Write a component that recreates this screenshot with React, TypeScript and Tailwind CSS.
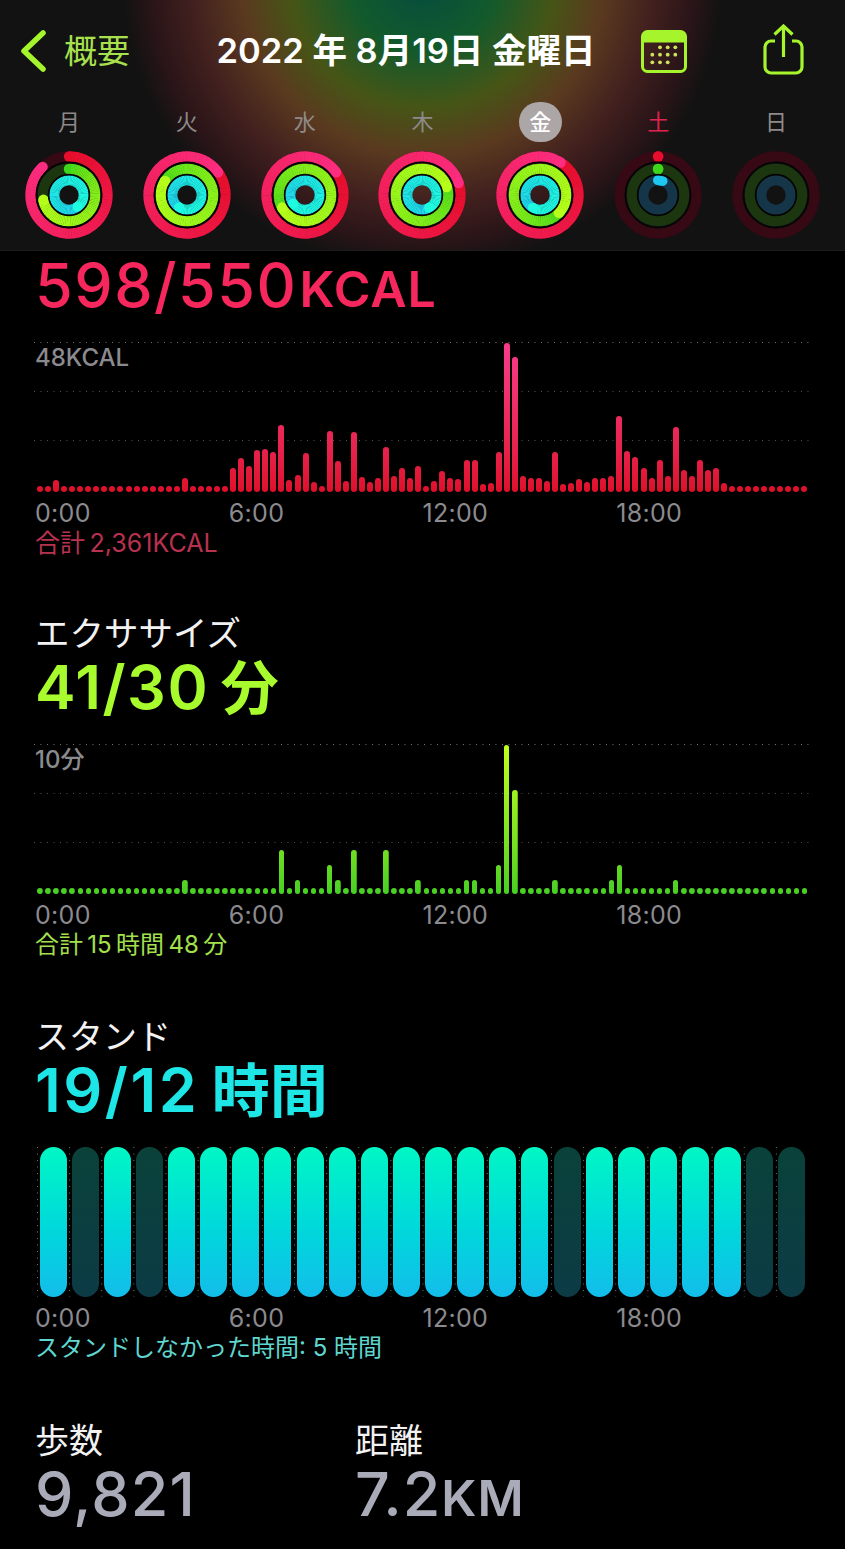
const redBars = [
  6, 6, 12, 6, 6, 6, 6, 6, 6, 6, 6, 6, 6, 6, 6, 6, 6, 6, 14, 6, 6, 6, 6, 6,
  24, 34, 26, 42, 43, 40, 67, 12, 17, 39, 10, 6, 61, 31, 11, 60, 15, 10, 14, 45, 16, 24, 14, 26,
  6, 11, 21, 14, 13, 32, 32, 8, 9, 40, 149, 135, 16, 14, 14, 11, 40, 8, 9, 13, 10, 14, 14, 16,
  76, 41, 35, 24, 14, 32, 16, 65, 22, 16, 32, 22, 24, 9, 6, 6, 6, 6, 6, 6, 6, 6, 6, 6,
];

const greenPeaks: Record<number, number> = {
  18: 14, 30: 44, 32: 14, 36: 29, 37: 14, 39: 44, 43: 44, 47: 14, 53: 14, 54: 14,
  57: 29, 58: 149, 59: 104, 64: 14, 71: 14, 72: 29, 79: 14,
};
const greenBars = Array.from({ length: 96 }, (_, i) => greenPeaks[i] ?? 6);

const standOff = [1, 3, 16, 22, 23];

const days = [
  { label: "月", rings: [0.88, 0.72, 1.4] },
  { label: "火", rings: [1.15, 1.84, 1.59] },
  { label: "水", rings: [1.15, 1.67, 1.65] },
  { label: "木", rings: [1.2, 1.2, 1.42] },
  { label: "金", rings: [1.09, 1.37, 1.58], selected: true },
  { label: "土", rings: [0.001, 0.001, 0.05], weekend: true },
  { label: "日", rings: [0, 0, 0] },
];

// curve: how quickly a lap moves from the start colour to the end colour
const ringStyles = [
  { r: 38.5, width: 10.3, track: "#360914", from: [230, 14, 44], to: [252, 45, 128], curve: 1 },
  { r: 26, width: 10.5, track: "#1c3710", from: [62, 214, 26], to: [182, 255, 26], curve: 0.5 },
  { r: 14.7, width: 10, track: "#143648", from: [31, 200, 240], to: [30, 252, 224], curve: 0.5 },
];

function polar(r: number, deg: number) {
  const a = ((deg - 90) * Math.PI) / 180;
  return [44 + r * Math.cos(a), 44 + r * Math.sin(a)];
}

function mix(from: number[], to: number[], t: number, curve: number) {
  const k = Math.pow(t, curve);
  const c = from.map((v, i) => Math.round(v + (to[i] - v) * k));
  return `rgb(${c[0]},${c[1]},${c[2]})`;
}

function ActivityRings({ rings }: { rings: number[] }) {
  return (
    <svg width="88" height="88" viewBox="0 0 88 88">
      {ringStyles.map((s, idx) => {
        const p = rings[idx];
        const end = p * 360;
        const start = p >= 1 ? end - 360 : 0;
        const steps = 72;
        const [ex, ey] = polar(s.r, end);
        const [sx, sy] = polar(s.r, start);
        return (
          <g key={idx}>
            <circle cx="44" cy="44" r={s.r} fill="none" stroke={s.track} strokeWidth={s.width} />
            {p > 0 && (
              <>
                <circle cx={sx} cy={sy} r={s.width / 2} fill={mix(s.from, s.to, 0, s.curve)} />
                {Array.from({ length: steps }, (_, i) => {
                  const a0 = start + ((end - start) * i) / steps;
                  const a1 = start + ((end - start) * (i + 1.15)) / steps;
                  const [x0, y0] = polar(s.r, a0);
                  const [x1, y1] = polar(s.r, Math.min(a1, end));
                  return (
                    <path
                      key={i}
                      d={`M${x0} ${y0}A${s.r} ${s.r} 0 0 1 ${x1} ${y1}`}
                      fill="none"
                      stroke={mix(s.from, s.to, p < 0.1 ? 0 : i / steps, s.curve)}
                      strokeWidth={s.width}
                    />
                  );
                })}
                <circle cx={ex} cy={ey} r={s.width / 2} fill={mix(s.from, s.to, p < 0.1 ? 0 : 1, s.curve)} />
              </>
            )}
          </g>
        );
      })}
      <circle cx="44" cy="44" r="32.6" fill="none" stroke="#050505" strokeWidth="1.6" />
      <circle cx="44" cy="44" r="20.4" fill="none" stroke="#050505" strokeWidth="1.6" />
    </svg>
  );
}

function CalendarIcon() {
  const dots = [
    [19, 17.3], [26.7, 17.3], [34.3, 17.3],
    [11.3, 24.7], [19, 24.7], [26.7, 24.7], [34.3, 24.7],
    [11.3, 32.3], [19, 32.3], [26.7, 32.3],
  ];
  return (
    <svg width="46" height="43" viewBox="0 0 46 43">
      <rect x="1.5" y="1.5" width="43" height="40" rx="5" fill="none" stroke="#a6f52c" strokeWidth="3" />
      <path d="M1.5 12V6.5a5 5 0 0 1 5-5h33a5 5 0 0 1 5 5V12z" fill="#a6f52c" stroke="#a6f52c" />
      {dots.map(([x, y]) => (
        <circle key={`${x}-${y}`} cx={x} cy={y} r="1.9" fill="#cfe35e" />
      ))}
    </svg>
  );
}

function ShareIcon() {
  return (
    <svg width="41" height="51" viewBox="0 0 41 51" fill="none" stroke="#a6f52c" strokeWidth="3.2">
      <path d="M12 17H8a6 6 0 0 0-6 6v20a6 6 0 0 0 6 6h25a6 6 0 0 0 6-6V23a6 6 0 0 0-6-6h-4" />
      <path d="M20.5 33V2.5" />
      <path d="M11.5 10.5l9-8.5 9 8.5" />
    </svg>
  );
}

function Gridlines() {
  return (
    <div className="-ml-[2px] flex w-[775px] flex-col gap-[48px]">
      <div className="h-px bg-[linear-gradient(to_right,#777_1.2px,transparent_1.2px)] bg-[length:6.5px_1px]" />
      <div className="h-px bg-[linear-gradient(to_right,#555_1.2px,transparent_1.2px)] bg-[length:6.5px_1px]" />
      <div className="h-px bg-[linear-gradient(to_right,#555_1.2px,transparent_1.2px)] bg-[length:6.5px_1px]" />
    </div>
  );
}

function AxisLabels() {
  return (
    <div className="mt-[6px] grid h-[30px] w-[775px] grid-cols-4 text-[25px] leading-[30px] tracking-[0.3px] text-[#8b8b8f]">
      <span>0:00</span>
      <span>6:00</span>
      <span>12:00</span>
      <span>18:00</span>
    </div>
  );
}

function BarChart({ bars, barClass, maxLabel }: { bars: number[]; barClass: string; maxLabel: string }) {
  return (
    <div className="relative ml-[1px] h-[150px] w-[773px]">
      <Gridlines />
      <span className="absolute -left-[1px] top-[1px] text-[24px] font-medium leading-[30px] text-[#8b8b8f]">
        {maxLabel}
      </span>
      <div className="absolute inset-0 flex items-end">
        {bars.map((h, i) => (
          <div key={i} className="flex flex-1 justify-center">
            <div className={barClass} style={{ height: h }} />
          </div>
        ))}
      </div>
    </div>
  );
}

function StandChart() {
  return (
    <div className="ml-[2px] flex h-[150px] w-[771px] bg-[radial-gradient(circle_at_0.5px_0.5px,#777_0.8px,transparent_0.9px)] bg-[length:32.125px_6.5px]">
      {Array.from({ length: 24 }, (_, i) => (
        <div key={i} className="flex flex-1 justify-center">
          {standOff.includes(i) ? (
            <div className="h-full w-[27px] rounded-full bg-linear-to-b from-[#0a423a] to-[#0c3b45]" />
          ) : (
            <div className="h-full w-[27px] rounded-full bg-linear-to-b from-[#00f7c4] to-[#13bdea]" />
          )}
        </div>
      ))}
    </div>
  );
}

export default function App() {
  return (
    <div className="h-[1549px] w-[845px] overflow-hidden bg-black font-[Inter,'Noto_Sans_CJK_JP',sans-serif] text-white">
      <header className="h-[251px] border-b border-[#1c1c1c] bg-[#121212] bg-[radial-gradient(ellipse_300px_290px_at_50%_-20px,#054b40_0%,#125a2c_24%,#465516_44%,#5a3a1f_60%,#43211f_76%,#2b1518_90%,#121212_100%)]">
        <div className="flex h-[102px] items-center pl-[20px]">
          <svg width="26" height="42" viewBox="0 0 26 42" fill="none" stroke="#a6f52c" strokeWidth="5.5" strokeLinecap="round" strokeLinejoin="round">
            <path d="M23 3L4 21l19 18" />
          </svg>
          <span className="ml-[18px] w-[66px] text-[33px] leading-none text-[#a8e04e]">概要</span>
          <h1 className="ml-[86px] w-[380px] whitespace-nowrap text-center text-[34.5px] font-semibold leading-none text-white">
            2022 年 8月19日 金曜日
          </h1>
          <div className="ml-[45px]">
            <CalendarIcon />
          </div>
          <div className="mb-[3px] ml-[76px]">
            <ShareIcon />
          </div>
        </div>
        <div className="grid grid-cols-7 px-[10px]">
          {days.map((d) => (
            <div key={d.label} className="flex flex-col items-center">
              <div
                className={
                  d.selected
                    ? "flex h-[40px] w-[43px] items-center justify-center rounded-full bg-[#aca6a6] text-[22px] font-medium text-white"
                    : d.weekend
                      ? "flex h-[40px] items-center justify-center text-[22px] text-[#e0234f]"
                      : "flex h-[40px] items-center justify-center text-[22px] text-[#8e8a8a]"
                }
              >
                {d.label}
              </div>
              <div className="mt-[9px]">
                <ActivityRings rings={d.rings} />
              </div>
            </div>
          ))}
        </div>
      </header>

      <main className="pl-[35px]">
        <section className="mt-[4px]">
          <p className="h-[60px] text-[61px] font-medium leading-[60px] tracking-[1.5px] text-[#f6275c]">
            598/550<span className="ml-[2px] text-[50px] font-semibold tracking-[1px]">KCAL</span>
          </p>
          <div className="mt-[27px]">
            <BarChart
              bars={redBars}
              maxLabel="48KCAL"
              barClass="w-[6px] rounded-full bg-linear-to-t from-[#df0f2a] to-[#fb3a8c] bg-[length:100%_150px] bg-bottom bg-no-repeat"
            />
          </div>
          <AxisLabels />
          <p className="h-[30px] text-[25px] leading-[30px] text-[#b8324f]">合計{"\u2009"}2,361KCAL</p>
        </section>

        <section className="mt-[56px]">
          <h2 className="h-[40px] text-[34.5px] leading-[40px] text-[#f2f2f2]">エクササイズ</h2>
          <p className="mt-[3px] h-[60px] text-[61px] font-semibold leading-[60px] tracking-[1.5px] text-[#a8fb2c]">
            41/30{"\u2009"}<span className="text-[58px] tracking-normal">分</span>
          </p>
          <div className="mt-[27px]">
            <BarChart
              bars={greenBars}
              maxLabel="10分"
              barClass="w-[5.5px] rounded-full bg-linear-to-t from-[#46d024] to-[#c0ff1c] bg-[length:100%_150px] bg-bottom bg-no-repeat"
            />
          </div>
          <AxisLabels />
          <p className="h-[30px] text-[24px] leading-[30px] text-[#a3e04c]">
            合計{"\u2009"}15{"\u2009"}時間{"\u2009"}48{"\u2009"}分
          </p>
        </section>

        <section className="mt-[57px]">
          <h2 className="h-[40px] text-[34px] leading-[40px] text-[#f2f2f2]">スタンド</h2>
          <p className="mt-[3px] h-[60px] text-[61px] font-semibold leading-[60px] tracking-[2.5px] text-[#1fe6e6]">
            19/12{"\u2009"}<span className="text-[58px] tracking-normal">時間</span>
          </p>
          <div className="mt-[27px]">
            <StandChart />
          </div>
          <AxisLabels />
          <p className="h-[30px] text-[24px] leading-[30px] text-[#5fd6cf]">スタンドしなかった時間: 5 時間</p>
        </section>

        <section className="mt-[58px] flex">
          <div className="w-[320px]">
            <h2 className="h-[40px] text-[34px] leading-[40px] text-[#f2f2f2]">歩数</h2>
            <p className="mt-[3px] h-[60px] text-[61px] font-medium leading-[60px] tracking-[1.2px] text-[#a9acb8]">9,821</p>
          </div>
          <div>
            <h2 className="h-[40px] text-[34px] leading-[40px] text-[#f2f2f2]">距離</h2>
            <p className="mt-[3px] h-[60px] text-[61px] font-medium leading-[60px] tracking-[1px] text-[#a9acb8]">
              7.2<span className="text-[50px] font-semibold">KM</span>
            </p>
          </div>
        </section>
      </main>
    </div>
  );
}
